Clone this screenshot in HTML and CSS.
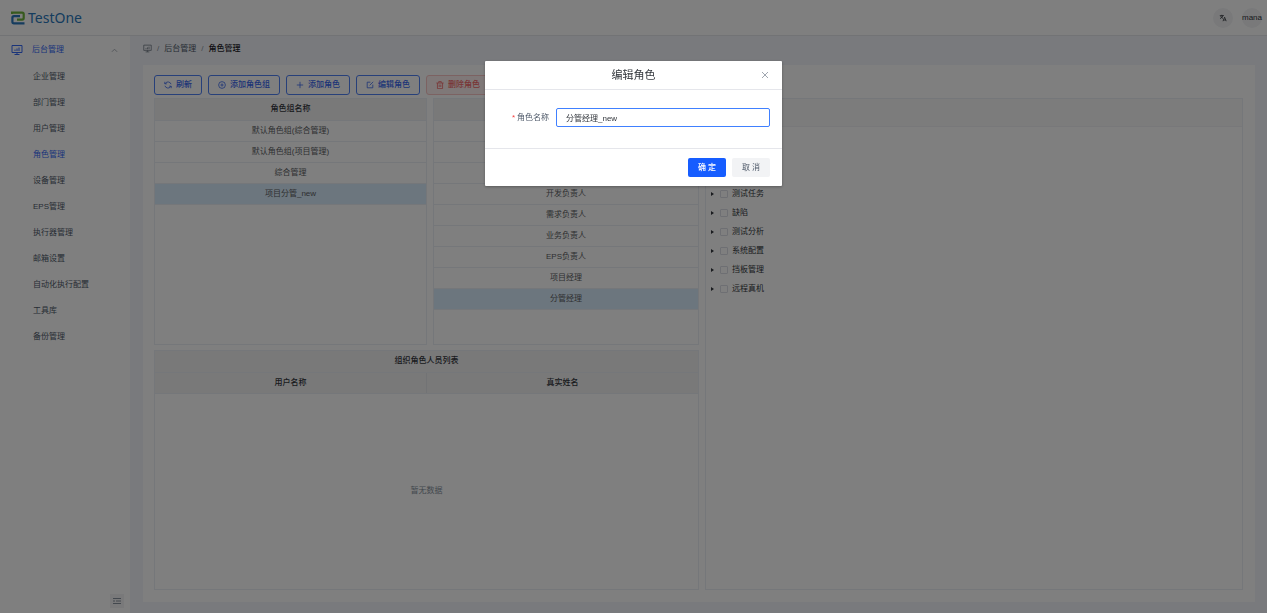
FILE: index.html
```html
<!DOCTYPE html>
<html lang="zh-CN">
<head>
    <meta charset="UTF-8">
    <meta name="viewport" content="width=device-width, initial-scale=1.0">
    <title>TestOne</title>
    <link rel="stylesheet" href="styles.css">
</head>
<body>
    <header class="header">
        <a class="logo" href="#">
            <svg class="logo-mark" viewBox="0 0 14 14" fill="none" stroke-width="2.2">
                <path d="M1 3V1.600h10.200q1.500 0 1.500 1.500v4q0 1.500-1.500 1.500H6" stroke="#6fb53c"/>
                <path d="M9 5.200H3q-1.600 0-1.600 1.600v4q0 1.600 1.600 1.600h10.500" stroke="#2a78bd"/>
            </svg>
            <span>TestOne</span>
        </a>
        <div class="header-tools">
            <button class="circle" aria-label="语言">
                <svg viewBox="0 0 10 10" fill="none" stroke="#33373d" stroke-width="1">
                    <path d="M1 2h5M3.5 1v1M5 2Q4 4.5 1.3 5.8M2 2.5q1 2.2 3 3M5 9l2-5 2 5M5.7 7.5h2.6"/>
                </svg>
            </button>
            <button class="circle avatar">mana</button>
        </div>
    </header>

    <div class="layout">
        <nav class="sidebar">
            <button class="menu-group">
                <svg class="icon-monitor" viewBox="0 0 12 12" fill="none" stroke="currentColor">
                    <path d="M1 1.5h10v7H1zM6 8.5v2M3.5 10.5h5M4 7V5.5M6 7V4.5M8 7V3.5"/>
                </svg>
                <span>后台管理</span>
                <svg class="icon-up" viewBox="0 0 8 8" fill="none" stroke="currentColor"><path d="M1 5.5l3-3 3 3"/></svg>
            </button>
            <a href="#">企业管理</a>
            <a href="#">部门管理</a>
            <a href="#">用户管理</a>
            <a href="#" class="active">角色管理</a>
            <a href="#">设备管理</a>
            <a href="#">EPS管理</a>
            <a href="#">执行器管理</a>
            <a href="#">邮箱设置</a>
            <a href="#">自动化执行配置</a>
            <a href="#">工具库</a>
            <a href="#">备份管理</a>
            <button class="collapse" aria-label="收起">
                <svg viewBox="0 0 8 8" fill="none" stroke="#86909c"><path d="M0 1.5h8M3 4h5M0 6.5h8M0 4h2"/></svg>
            </button>
        </nav>

        <main class="main">
            <div class="breadcrumb">
                <svg viewBox="0 0 12 12" fill="none" stroke="#6b7480">
                    <path d="M1 1.500h10v7H1zM6 8.500v2M3.500 10.500h5M4 7V5.500M6 7V4.500M8 7V3.500"/>
                </svg>
                <span class="slash">/</span>
                <a href="#">后台管理</a>
                <span class="slash">/</span>
                <span class="current">角色管理</span>
            </div>

            <section class="card">
                <div class="toolbar">
                    <button class="btn-outline">
                        <svg viewBox="0 0 10 10" fill="none" stroke="currentColor"><path d="M8.8 4A4 4 0 0 0 2 2.5L1 3.5M1 1v2.5h2.5M1.2 6A4 4 0 0 0 8 7.5l1-1M9 9V6.500H6.500"/></svg>
                        刷新
                    </button>
                    <button class="btn-outline">
                        <svg viewBox="0 0 10 10" fill="none" stroke="currentColor"><circle cx="5" cy="5" r="4.200"/><path d="M5 3v4M3 5h4"/></svg>
                        添加角色组
                    </button>
                    <button class="btn-outline">
                        <svg viewBox="0 0 10 10" fill="none" stroke="currentColor"><path d="M5 1v8M1 5h8"/></svg>
                        添加角色
                    </button>
                    <button class="btn-outline">
                        <svg viewBox="0 0 10 10" fill="none" stroke="currentColor"><path d="M5.500 1.500h-4v7h7v-4M4.500 5.500l4.500-4.500"/></svg>
                        编辑角色
                    </button>
                    <button class="btn-outline danger">
                        <svg viewBox="0 0 10 10" fill="none" stroke="currentColor"><path d="M.5 2.500h9M3.500 2.500v-2h3v2M1.800 2.500v7h6.400v-7M4 4.500v3M6 4.500v3"/></svg>
                        删除角色
                    </button>
                </div>

                <div class="panels">
                    <div class="left">
                        <div class="tables">
                            <div class="box">
                                <table>
                                    <thead><tr><th>角色组名称</th></tr></thead>
                                    <tbody>
                                        <tr><td>默认角色组(综合管理)</td></tr>
                                        <tr><td>默认角色组(项目管理)</td></tr>
                                        <tr><td>综合管理</td></tr>
                                        <tr class="selected"><td>项目分管_new</td></tr>
                                    </tbody>
                                </table>
                            </div>
                            <div class="box">
                                <table>
                                    <thead><tr><th></th></tr></thead>
                                    <tbody>
                                        <tr><td></td></tr>
                                        <tr><td></td></tr>
                                        <tr><td></td></tr>
                                        <tr><td>开发负责人</td></tr>
                                        <tr><td>需求负责人</td></tr>
                                        <tr><td>业务负责人</td></tr>
                                        <tr><td>EPS负责人</td></tr>
                                        <tr><td>项目经理</td></tr>
                                        <tr class="selected"><td>分管经理</td></tr>
                                    </tbody>
                                </table>
                            </div>
                        </div>
                        <div class="box members">
                            <table>
                                <thead>
                                    <tr><th colspan="2">组织角色人员列表</th></tr>
                                    <tr><th>用户名称</th><th>真实姓名</th></tr>
                                </thead>
                            </table>
                            <div class="empty">暂无数据</div>
                        </div>
                    </div>

                    <div class="box">
                        <div class="tree-head"></div>
                        <ul class="tree">
                            <li><i class="caret"></i><label><input type="checkbox">测试任务</label></li>
                            <li><i class="caret"></i><label><input type="checkbox">缺陷</label></li>
                            <li><i class="caret"></i><label><input type="checkbox">测试分析</label></li>
                            <li><i class="caret"></i><label><input type="checkbox">系统配置</label></li>
                            <li><i class="caret"></i><label><input type="checkbox">挡板管理</label></li>
                            <li><i class="caret"></i><label><input type="checkbox">远程真机</label></li>
                        </ul>
                    </div>
                </div>
            </section>
        </main>
    </div>

    <div class="mask">
        <form class="dialog" role="dialog" aria-labelledby="dialog-title">
            <div class="dialog-head">
                <h2 id="dialog-title">编辑角色</h2>
                <button type="button" class="close" aria-label="关闭">
                    <svg viewBox="0 0 8 8" stroke="#a0a7b0"><path d="M1 1l6 6M7 1L1 7"/></svg>
                </button>
            </div>
            <div class="dialog-body">
                <label for="role-name"><span class="required">*</span>角色名称</label>
                <input type="text" id="role-name" value="分管经理_new">
            </div>
            <div class="dialog-foot">
                <button type="button" class="btn primary">确 定</button>
                <button type="button" class="btn">取 消</button>
            </div>
        </form>
    </div>
</body>
</html>
```

FILE: styles.css
```css
* {
    box-sizing: border-box;
}

body {
    margin: 0;
    min-height: 100vh;
    display: flex;
    flex-direction: column;
    font-family: "Liberation Sans", "Noto Sans CJK SC", sans-serif;
    font-size: 8px;
    line-height: 12px;
    color: #33373d;
    background-color: #fff;
}

button,
input {
    font: inherit;
    color: inherit;
    margin: 0;
}

button {
    padding: 0;
    border: none;
    background: none;
    cursor: pointer;
}

a {
    color: inherit;
    text-decoration: none;
}

/* Header */
.header {
    display: flex;
    align-items: center;
    justify-content: space-between;
    height: 36px;
    padding: 0 5px 0 11px;
    border-bottom: 1px solid #e5e6eb;
}

.logo {
    display: flex;
    align-items: center;
    gap: 3px;
    font-family: "Noto Sans", sans-serif;
    font-size: 14px;
    line-height: 20px;
    color: #2a78bd;
}

.logo-mark {
    width: 14px;
    height: 14px;
}

.header-tools {
    display: flex;
    gap: 9px;
}

.circle {
    display: flex;
    align-items: center;
    justify-content: center;
    width: 20px;
    height: 20px;
    border-radius: 50%;
    background-color: #f2f3f5;
}

.circle svg {
    width: 8px;
    height: 8px;
}

/* Layout */
.layout {
    flex: 1;
    display: flex;
}

.sidebar {
    flex: none;
    display: flex;
    flex-direction: column;
    width: 130px;
    padding-bottom: 5px;
    color: #4e5969;
}

.sidebar a {
    height: 26px;
    padding-left: 33px;
    line-height: 26px;
}

.menu-group {
    display: flex;
    align-items: center;
    height: 28px;
    padding: 0 12px 0 11px;
    color: #3468f5;
}

.menu-group span {
    flex: 1;
    margin-left: 9px;
    text-align: left;
}

.icon-monitor {
    width: 12px;
    height: 12px;
}

.icon-up {
    width: 7px;
    height: 7px;
    color: #a0a7b0;
}

.sidebar .active {
    color: #3468f5;
}

.collapse {
    display: flex;
    align-items: center;
    justify-content: center;
    width: 14px;
    height: 14px;
    margin: auto 6px 0 auto;
    background-color: #f2f3f5;
}

.collapse svg {
    width: 8px;
    height: 8px;
}

.main {
    flex: 1;
    display: flex;
    flex-direction: column;
    padding: 0 12px 11px 13px;
    background-color: #f2f5fa;
}

.breadcrumb {
    display: flex;
    align-items: center;
    gap: 5px;
    height: 29px;
    padding-bottom: 4px;
    color: #4e5969;
}

.breadcrumb svg {
    width: 9px;
    height: 9px;
}

.slash {
    color: #86909c;
}

.current {
    color: #1d2129;
    font-weight: 500;
}

.card {
    flex: 1;
    display: flex;
    flex-direction: column;
    gap: 3px;
    padding: 10px 12px 12px 11px;
    background-color: #fff;
}

/* Toolbar */
.toolbar {
    display: flex;
    gap: 6px;
}

.btn-outline {
    display: flex;
    align-items: center;
    gap: 4px;
    height: 20px;
    padding: 0 9px;
    border: 1px solid #4f80f5;
    border-radius: 3px;
    color: #3a68ee;
    font-weight: 500;
}

.btn-outline svg {
    width: 8px;
    height: 8px;
}

.danger {
    border-color: #f8c4c4;
    background-color: #fef0f0;
    color: #f26a6a;
}

/* Tables */
.panels {
    flex: 1;
    display: grid;
    grid-template-columns: 545fr 538fr;
    gap: 6px;
}

.left {
    display: flex;
    flex-direction: column;
    gap: 5px;
}

.tables {
    display: grid;
    grid-template-columns: 273fr 266fr;
    gap: 6px;
    min-height: 247px;
}

.box {
    border: 1px solid #ebeef5;
}

table {
    width: 100%;
    table-layout: fixed;
    border-collapse: collapse;
}

th,
td {
    height: 21px;
    padding: 0;
    border-bottom: 1px solid #ebeef5;
    text-align: center;
    font-weight: 400;
}

th {
    background-color: #f2f2f3;
    font-weight: 500;
}

th + th {
    border-left: 1px solid #e5e6eb;
}

td {
    color: #5b5e63;
}

.selected {
    background-color: #d9ecfc;
}

.members {
    flex: 1;
    display: flex;
    flex-direction: column;
}

.empty {
    flex: 1;
    display: flex;
    align-items: center;
    justify-content: center;
    color: #86909c;
}

/* Permission tree */
.tree-head {
    height: 28px;
    background-color: #f8f8f9;
    border-bottom: 1px solid #f0f1f4;
}

.tree {
    margin: 0;
    padding: 57px 0 0 5px;
    list-style: none;
}

.tree li,
.tree label {
    display: flex;
    align-items: center;
    height: 19px;
}

.caret {
    width: 3px;
    margin-right: 6px;
    border: 2px solid transparent;
    border-left: 3px solid #33373d;
    border-right: none;
}

.tree input {
    appearance: none;
    width: 8px;
    height: 8px;
    margin-right: 4px;
    border: 1px solid #dcdfe6;
    border-radius: 1px;
}

/* Dialog */
.mask {
    position: fixed;
    inset: 0;
    background-color: rgba(0, 0, 0, 0.5);
}

.dialog {
    width: 297px;
    margin: 61px auto 0;
    border-radius: 1px;
    background-color: #fff;
    box-shadow: 0 1px 3px rgba(0, 0, 0, 0.3);
}

.dialog-head {
    display: grid;
    grid-template-columns: 1fr auto 1fr;
    align-items: center;
    height: 29px;
    padding: 0 13px;
    border-bottom: 1px solid #e5e6eb;
}

.dialog-head h2 {
    grid-column: 2;
    margin: 0;
    font-size: 11px;
    line-height: 16px;
    font-weight: 400;
}

.close {
    display: flex;
    justify-self: end;
}

.close svg {
    width: 8px;
    height: 8px;
}

.dialog-body {
    display: flex;
    align-items: center;
    gap: 7px;
    padding: 18px 12px 21px;
}

.dialog-body label {
    width: 52px;
    text-align: right;
    color: #4e5969;
}

.required {
    margin-right: 2px;
    color: #f53f3f;
}

.dialog-body input {
    flex: 1;
    min-width: 0;
    height: 19px;
    padding: 0 9px;
    border: 1px solid #4080ff;
    border-radius: 2px;
    outline: none;
}

.dialog-foot {
    display: flex;
    justify-content: flex-end;
    gap: 6px;
    padding: 9px 12px;
    border-top: 1px solid #e5e6eb;
}

.btn {
    width: 38px;
    height: 19px;
    border-radius: 2px;
    background-color: #f2f3f5;
    color: #4e5969;
}

.primary {
    background-color: #165dff;
    color: #fff;
    font-weight: 500;
}
```
